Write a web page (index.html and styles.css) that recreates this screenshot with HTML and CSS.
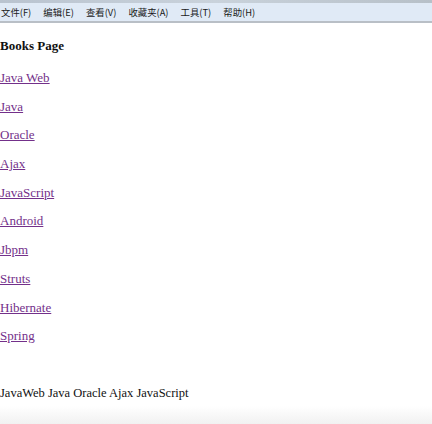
FILE: index.html
```html
<!DOCTYPE html>
<html>
<head>
<meta charset="utf-8">
<link rel="stylesheet" href="styles.css">
</head>
<body>
<div class="topstrip"></div>
<div class="menubar">
  <span class="mi">文件(F)</span>
  <span class="mi">编辑(E)</span>
  <span class="mi">查看(V)</span>
  <span class="mi">收藏夹(A)</span>
  <span class="mi">工具(T)</span>
  <span class="mi">帮助(H)</span>
</div>
<div class="page">
  <h1 class="title">Books Page</h1>
  <ul class="links">
    <li><a href="#">Java Web</a></li>
    <li><a href="#">Java</a></li>
    <li><a href="#">Oracle</a></li>
    <li><a href="#">Ajax</a></li>
    <li><a href="#">JavaScript</a></li>
    <li><a href="#">Android</a></li>
    <li><a href="#">Jbpm</a></li>
    <li><a href="#">Struts</a></li>
    <li><a href="#">Hibernate</a></li>
    <li><a href="#">Spring</a></li>
  </ul>
  <p class="summary">JavaWeb Java Oracle Ajax JavaScript</p>
</div>
<div class="bottomfade"></div>
</body>
</html>
```
FILE: styles.css
```css
html, body {
  margin: 0;
  padding: 0;
  background: #fff;
  height: 100%;
}
body {
  display: flex;
  flex-direction: column;
  font-family: "Liberation Serif", "Times New Roman", serif;
  color: #111;
  overflow: hidden;
}
.topstrip {
  height: 3px;
  background: linear-gradient(to right, #b9c3cf, #c9d2db 50%, #b7c0c8);
}
.menubar {
  height: 18px;
  background: #e0eaf6;
  border-bottom: 2px solid #b9bfc6;
  display: flex;
  align-items: center;
  gap: 12px;
  padding-left: 1px;
  font-family: "Noto Sans CJK SC", "Liberation Sans", sans-serif;
  font-size: 9.4px;
  color: #1a1a1a;
}
.mi { white-space: nowrap; }
.page {
  flex: 1;
  padding-top: 15px;
}
.title {
  font-size: 13px;
  font-weight: bold;
  margin: 0 0 17px;
  line-height: 15px;
}
.links {
  list-style: none;
  margin: 0;
  padding: 0;
  display: flex;
  flex-direction: column;
  gap: 13.7px;
}
.links li {
  line-height: 15px;
  font-size: 13px;
}
.links a {
  color: #73308a;
  text-decoration: underline;
}
.summary {
  margin: 43px 0 0;
  font-size: 12.5px;
  line-height: 15px;
}
.bottomfade {
  height: 18px;
  background: linear-gradient(#fff, #f1f1f1);
}
```
